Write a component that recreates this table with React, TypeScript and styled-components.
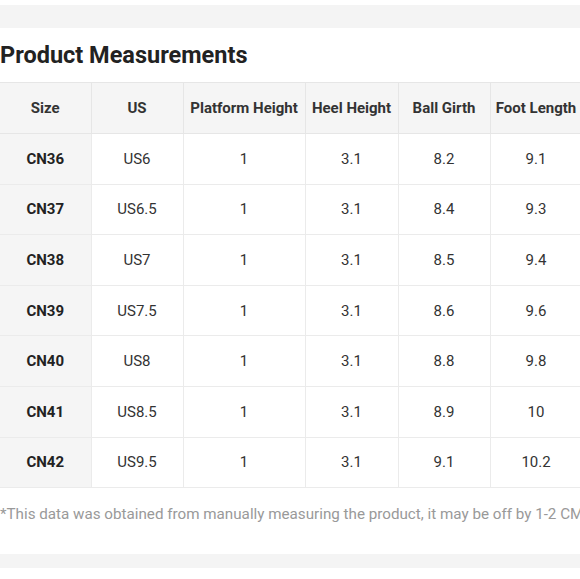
import React from 'react';
import styled, { createGlobalStyle } from 'styled-components';

interface SizeRow {
  size: string;
  us: string;
  platform: string;
  heel: string;
  ball: string;
  foot: string;
}

const rows: SizeRow[] = [
  { size: 'CN36', us: 'US6', platform: '1', heel: '3.1', ball: '8.2', foot: '9.1' },
  { size: 'CN37', us: 'US6.5', platform: '1', heel: '3.1', ball: '8.4', foot: '9.3' },
  { size: 'CN38', us: 'US7', platform: '1', heel: '3.1', ball: '8.5', foot: '9.4' },
  { size: 'CN39', us: 'US7.5', platform: '1', heel: '3.1', ball: '8.6', foot: '9.6' },
  { size: 'CN40', us: 'US8', platform: '1', heel: '3.1', ball: '8.8', foot: '9.8' },
  { size: 'CN41', us: 'US8.5', platform: '1', heel: '3.1', ball: '8.9', foot: '10' },
  { size: 'CN42', us: 'US9.5', platform: '1', heel: '3.1', ball: '9.1', foot: '10.2' },
];

const columns = [
  { label: 'Size', width: 91 },
  { label: 'US', width: 92 },
  { label: 'Platform Height', width: 122 },
  { label: 'Heel Height', width: 93 },
  { label: 'Ball Girth', width: 92 },
  { label: 'Foot Length', width: 92 },
];

const App: React.FC = () => {
  return (
    <Page>
      <GlobalStyle />
      <Band />
      <Section>
        <Title>Product Measurements</Title>
        <Table>
          <colgroup>
            {columns.map((c) => (
              <col key={c.label} style={{ width: c.width }} />
            ))}
          </colgroup>
          <thead>
            <tr>
              {columns.map((c) => (
                <HeadCell key={c.label}>{c.label}</HeadCell>
              ))}
            </tr>
          </thead>
          <tbody>
            {rows.map((r) => (
              <Row key={r.size}>
                <Cell $label>{r.size}</Cell>
                <Cell>{r.us}</Cell>
                <Cell>{r.platform}</Cell>
                <Cell>{r.heel}</Cell>
                <Cell>{r.ball}</Cell>
                <Cell>{r.foot}</Cell>
              </Row>
            ))}
          </tbody>
        </Table>
        <Note>*This data was obtained from manually measuring the product, it may be off by 1-2 CM</Note>
      </Section>
      <Band $bottom />
    </Page>
  );
};

export default App;

const GlobalStyle = createGlobalStyle`
  html, body {
    margin: 0;
    padding: 0;
    background: #ffffff;
    overflow: hidden;
  }
  body {
    font-family: Roboto, "Noto Sans", Arial, sans-serif;
    color: #333;
  }
`;

const Page = styled.div`
  width: 580px;
  height: 579px;
  overflow: hidden;
  padding-top: 5px;
  box-sizing: border-box;
`;

const Band = styled.div<{ $bottom?: boolean }>`
  height: ${({ $bottom }) => ($bottom ? '14px' : '23px')};
  background: #f4f4f4;
`;

const Section = styled.section`
  padding: 13px 0 30px;
`;

const Title = styled.h2`
  margin: 0 0 12px;
  font-size: 23.5px;
  line-height: 29px;
  font-weight: 700;
  color: #222;
  white-space: nowrap;
`;

const Table = styled.table`
  border-collapse: collapse;
  table-layout: fixed;
  width: 582px;
  font-size: 15px;
`;

const HeadCell = styled.th`
  height: 50px;
  padding: 0 2px;
  background: #f5f5f5;
  border: 1px solid #e6e6e6;
  border-left: none;
  font-weight: 700;
  color: #333;
  text-align: center;
  white-space: nowrap;
`;

const Row = styled.tr`
  height: 50.6px;
`;

const Cell = styled.td<{ $label?: boolean }>`
  padding: 0;
  border: 1px solid #ebebeb;
  border-left: none;
  text-align: center;
  background: ${({ $label }) => ($label ? '#f5f5f5' : '#ffffff')};
  font-weight: ${({ $label }) => ($label ? 700 : 400)};
  color: ${({ $label }) => ($label ? '#222' : '#333')};
`;

const Note = styled.p`
  margin: 16px 0 0;
  font-size: 15.2px;
  line-height: 20px;
  color: #999;
  white-space: nowrap;
`;
